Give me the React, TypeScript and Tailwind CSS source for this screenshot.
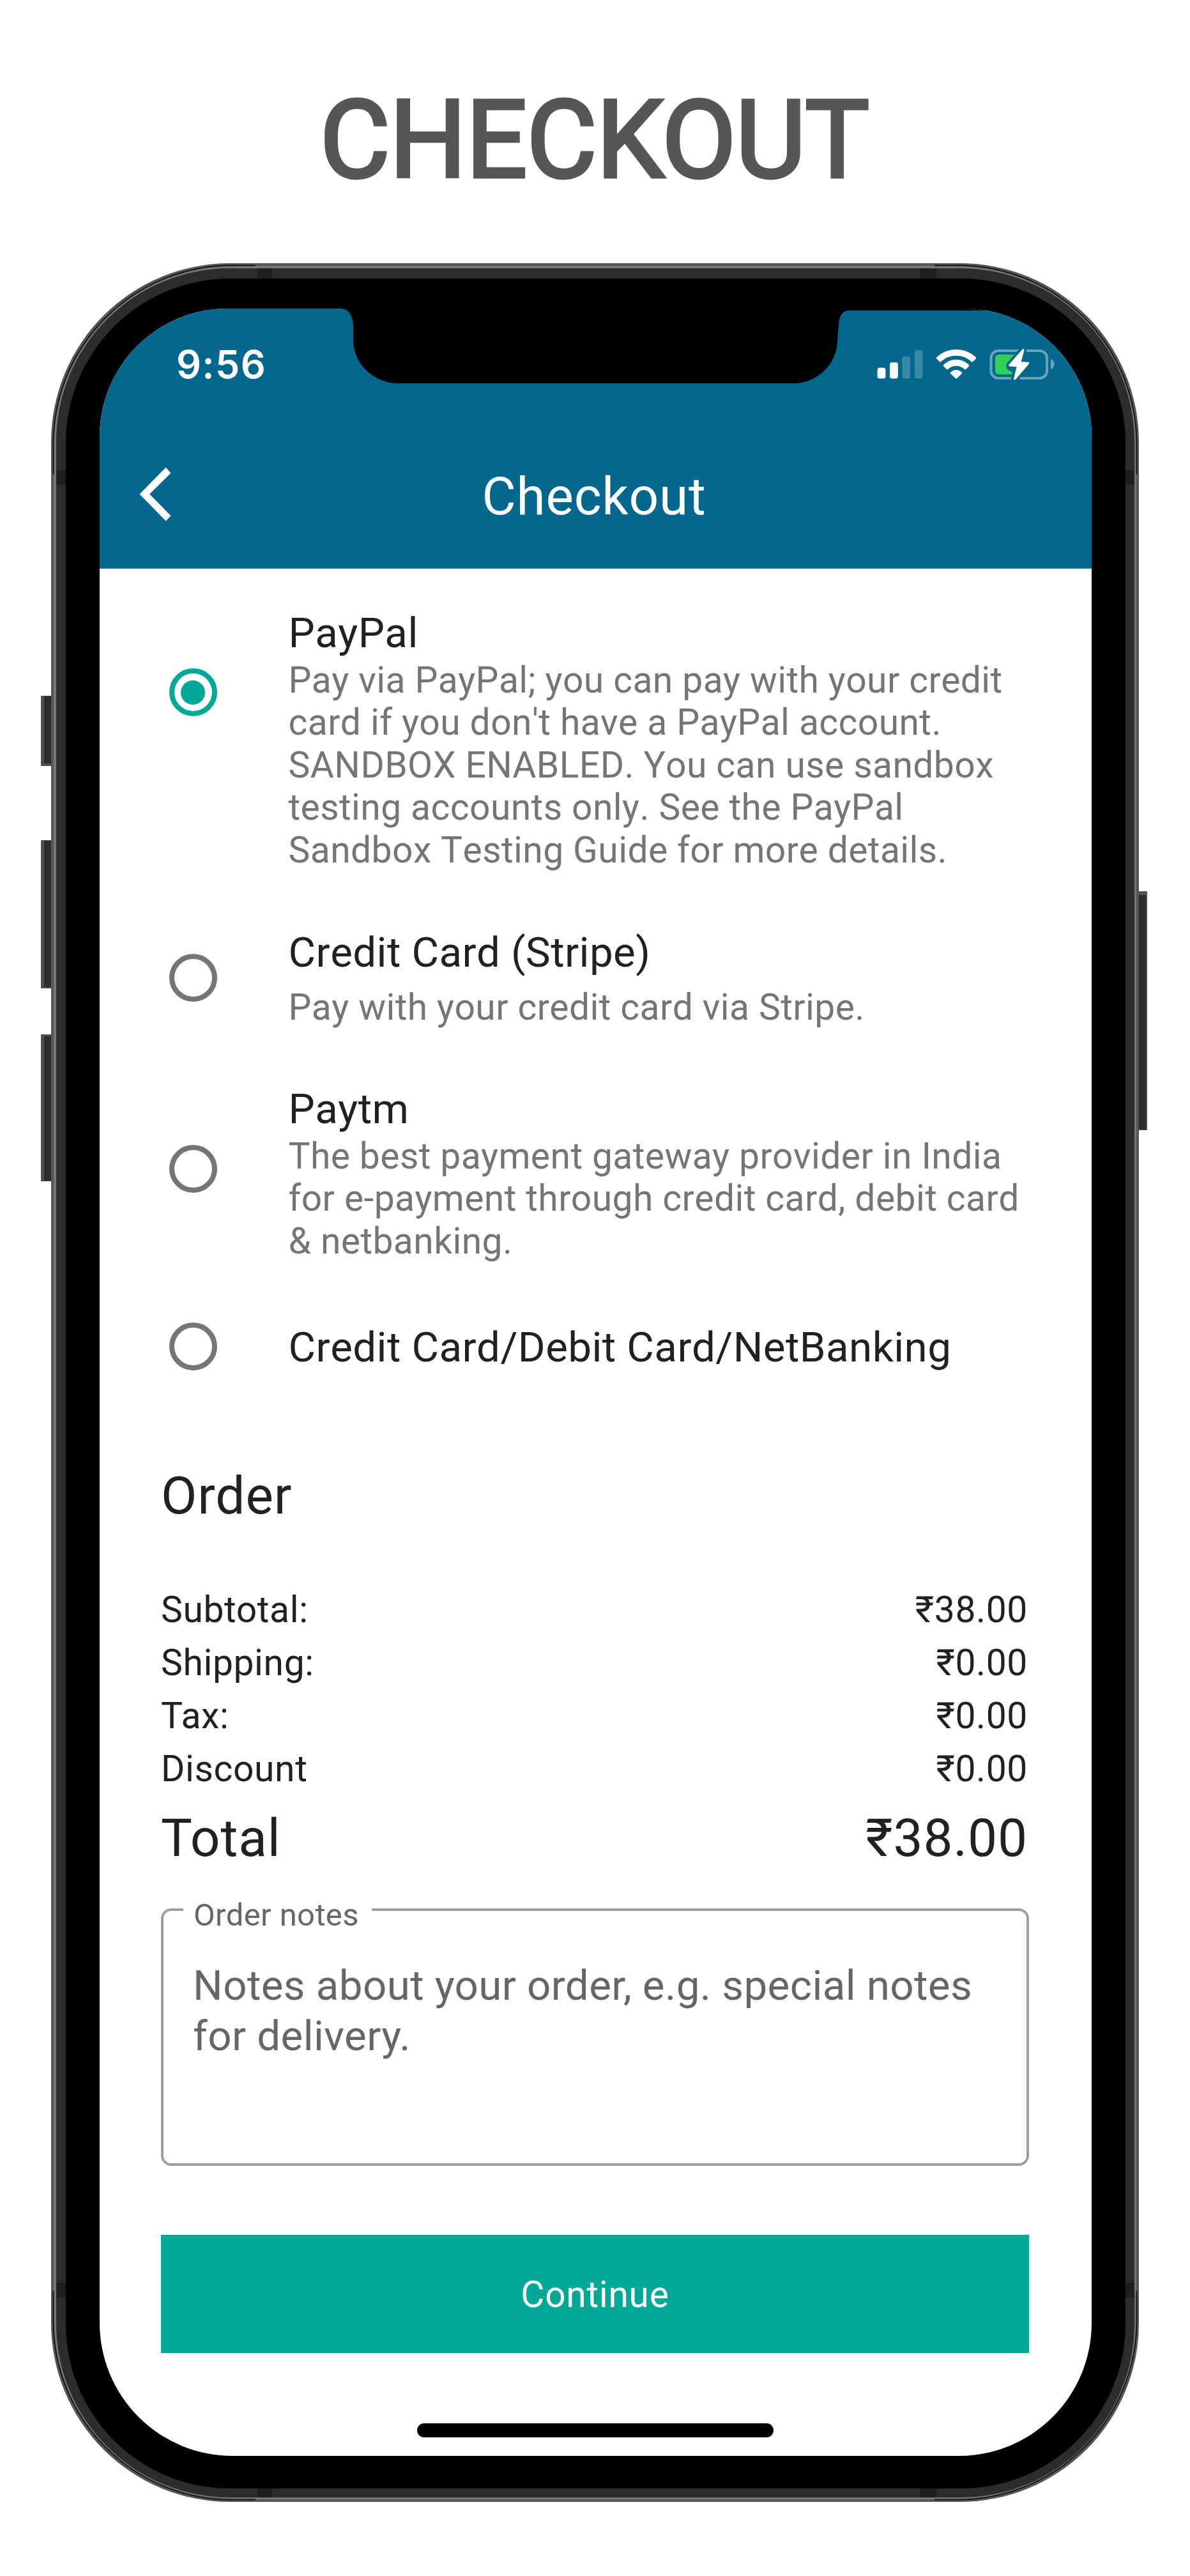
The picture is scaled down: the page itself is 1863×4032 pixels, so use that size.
import type { ReactNode } from 'react';

type Method = {
  name: string;
  lines?: string[];
  selected?: boolean;
  row: string;
  radio: string;
  gap?: string;
};

const methods: Method[] = [
  {
    name: 'PayPal',
    selected: true,
    row: 'h-[499.5px]',
    radio: 'pt-[94px]',
    gap: 'gap-[1.5px]',
    lines: [
      'Pay via PayPal; you can pay with your credit',
      "card if you don't have a PayPal account.",
      'SANDBOX ENABLED. You can use sandbox',
      'testing accounts only. See the PayPal',
      'Sandbox Testing Guide for more details.',
    ],
  },
  {
    name: 'Credit Card (Stripe)',
    row: 'h-[245.5px]',
    radio: 'pt-[41px]',
    gap: 'gap-[14px]',
    lines: ['Pay with your credit card via Stripe.'],
  },
  {
    name: 'Paytm',
    row: 'h-[373px]',
    radio: 'pt-[94.5px]',
    gap: 'gap-[1.5px]',
    lines: [
      'The best payment gateway provider in India',
      'for e-payment through credit card, debit card',
      '& netbanking.',
    ],
  },
  { name: 'Credit Card/Debit Card/NetBanking', row: 'h-[78px]', radio: 'pt-0' },
];

const totals = [
  ['Subtotal:', '₹38.00'],
  ['Shipping:', '₹0.00'],
  ['Tax:', '₹0.00'],
  ['Discount', '₹0.00'],
];

function Radio({ selected }: { selected?: boolean }) {
  return (
    <div
      className={`flex size-[75px] shrink-0 items-center justify-center rounded-full border-8 ${
        selected ? 'border-[#00a995]' : 'border-[#757575]'
      }`}
    >
      {selected && <div className="size-[38px] rounded-full bg-[#00a995]" />}
    </div>
  );
}

function StatusIcons() {
  return (
    <svg width="278" height="50" viewBox="1373 545 278 50" fill="#fff">
      <rect x="1373.6" y="575.6" width="12.8" height="17" rx="3.5" />
      <rect x="1393" y="567.3" width="12.8" height="25.3" rx="3.5" />
      <rect x="1412.5" y="557.7" width="12.4" height="34.9" rx="3.5" fillOpacity=".22" />
      <rect x="1432" y="548" width="12.4" height="44.6" rx="3.5" fillOpacity=".22" />
      <path d="M1466.3 559.2 Q1465.2 560.4 1466.3 561.6 L1471 566.1 Q1472.2 567 1473.4 566 C1486 553.7 1508 553.7 1520.6 566 Q1521.8 567 1523 566.1 L1527.7 561.6 Q1528.8 560.4 1527.7 559.2 C1511 542.8 1483 542.8 1466.3 559.2Z" />
      <path d="M1477.2 571.1 Q1476.2 572.3 1477.3 573.4 L1482 577.9 Q1483.2 578.7 1484.4 577.8 C1491.5 571.2 1502.5 571.2 1509.6 577.8 Q1510.8 578.7 1512 577.9 L1516.7 573.4 Q1517.8 572.3 1516.8 571.1 C1505.5 560 1488.5 560 1477.2 571.1Z" />
      <path d="M1488.2 582.8 Q1487.2 584 1488.3 585.1 L1495.8 592.1 Q1497 593.2 1498.2 592.1 L1505.7 585.1 Q1506.8 584 1505.8 582.8 C1501 577.6 1493 577.6 1488.2 582.8Z" />
      <rect x="1551.5" y="548.9" width="87.6" height="43" rx="11.5" fill="none" stroke="#fff" strokeOpacity=".4" strokeWidth="4" />
      <path d="M1645 561.7 C1652.5 564.5 1652.5 575.5 1645 578.5Z" fillOpacity=".4" />
      <path d="M1564 555 H1590 L1576 571 V577 L1590 586 H1564 Q1558 586 1558 580 V561 Q1558 555 1564 555Z" fill="#30d158" />
      <path
        d="M1600.4 547 L1579.5 570.8 Q1578.2 573.3 1581.2 573.6 L1591.6 574.2 L1587 592.6 Q1587.1 596 1590.2 593.8 L1611 569.6 Q1612.3 567.2 1609.2 566.8 L1598.7 566.2 L1603.5 548 Q1603.3 544.8 1600.4 547Z"
        stroke="#03678e"
        strokeWidth="8"
        paintOrder="stroke"
      />
    </svg>
  );
}

function Notch() {
  return (
    <svg className="absolute top-0 left-0" width="1553" height="118" viewBox="0 0 1553 118" fill="#000">
      <path d="M378 0 Q395 1 397 26 L397 51 C398 87 429 117 468 117 H1086 C1124 117 1155 86 1155 50 L1157 24 Q1159 3 1173 3 H1553 V0Z" />
    </svg>
  );
}

/* Hardware keys that stick out behind the phone's edge. */
function SideKeys() {
  return (
    <svg className="absolute inset-0 overflow-visible" width="1703" height="3504" viewBox="0 0 1703 3504">
      <g fill="#505050">
        <rect x="-16" y="677" width="20" height="110" />
        <rect x="-16" y="903" width="20" height="232" />
        <rect x="-16" y="1207" width="20" height="230" />
        <rect x="1699" y="983" width="17" height="374" />
      </g>
      <g fill="#2c2c2c">
        <rect x="-11" y="678" width="15" height="105" />
        <rect x="-11" y="904" width="15" height="229" />
        <rect x="-11" y="1210" width="15" height="226" />
        <rect x="1699" y="989" width="15" height="367" />
      </g>
    </svg>
  );
}

/* Antenna bands and the dark seam that follows each corner of the metal rim. */
function RimDetails() {
  return (
    <svg className="absolute inset-0" width="1703" height="3504" viewBox="0 0 1703 3504">
      <g fill="none" stroke="#161616" strokeWidth="2">
        <path d="M3.5 330 V283 A279.5 279.5 0 0 1 283 3.5 H320" />
        <path d="M1383 3.5 H1420 A279.5 279.5 0 0 1 1699.5 283 V330" />
        <path d="M3.5 3174 V3221 A279.5 279.5 0 0 0 283 3500.5 H320" />
        <path d="M1383 3500.5 H1420 A279.5 279.5 0 0 0 1699.5 3221 V3174" />
      </g>
      <g fill="#1e1e1e">
        <rect x="323" y="8" width="23" height="16" />
        <rect x="1360" y="8" width="26" height="16" />
        <rect x="323" y="3483" width="23" height="14" />
        <rect x="1360" y="3483" width="26" height="14" />
        <rect x="8" y="324" width="15" height="22" />
        <rect x="1682" y="324" width="14" height="22" />
        <rect x="8" y="3161" width="15" height="23" />
        <rect x="1682" y="3161" width="14" height="23" />
      </g>
    </svg>
  );
}

function Phone({ children }: { children: ReactNode }) {
  return (
    <div className="relative ml-20 h-[3504px] w-[1703px]">
      <SideKeys />
      <div className="relative h-full rounded-[280px] bg-[#555555] p-1">
        <div className="h-full rounded-[276px] bg-[#757575] pt-1 pr-[3px] pb-[3px] pl-1">
          <div className="h-full rounded-[272px] bg-[#2c2c2c] pt-4 pr-3.5 pb-3.5 pl-[15px]">
            <div className="h-full rounded-[257px] bg-black pt-[47px] pr-[53px] pb-[51px] pl-[53px]">
              <div className="relative flex h-full flex-col overflow-hidden rounded-t-[200px] rounded-b-[208px] bg-white">
                {children}
              </div>
            </div>
          </div>
        </div>
        <RimDetails />
      </div>
    </div>
  );
}

export default function App() {
  return (
    <div className="flex h-[4032px] w-[1863px] flex-col overflow-hidden bg-white font-['Roboto',sans-serif] text-[#212121]">
      <h1 className="h-[412px] pt-[118.5px] pr-0.5 text-center text-[169px] leading-[200px] tracking-[-0.9px] text-[#565656] [-webkit-text-stroke:4.8px_#565656]">
        CHECKOUT
      </h1>

      <Phone>
        <header className="flex h-[407px] shrink-0 flex-col bg-[#03678e] text-white">
          <div className="flex h-[124px] items-end justify-between pr-[58px] pl-[120px]">
            <span className="font-['Inter',sans-serif] text-[61px] leading-[74px] font-semibold tracking-[1.3px]">9:56</span>
            <div className="pb-3">
              <StatusIcons />
            </div>
          </div>
          <div className="grid flex-1 grid-cols-[200px_1fr_205px] items-center pt-[122px] pb-[65px]">
            <svg className="ml-[62px]" width="50" height="92" viewBox="218 731 50 92" fill="#fff">
              <path d="M259.7 731.6 L267.4 740.4 L234.2 773.4 L267.4 807.2 L259.7 815.6 L218.6 773.4Z" />
            </svg>
            <h2 className="text-center text-[82px] leading-[96px] tracking-[0.7px]">Checkout</h2>
          </div>
        </header>
        <Notch />

        <main className="flex w-[1455px] flex-1 flex-col pt-[62px] pl-24">
          <div className="flex flex-col [font-kerning:none]">
            {methods.map((m) => (
              <div key={m.name} className={`flex items-start gap-28 pl-[12.5px] ${m.row}`}>
                <div className={m.radio}>
                  <Radio selected={m.selected} />
                </div>
                <div className={`flex flex-col whitespace-nowrap ${m.gap ?? ''}`}>
                  <div className="text-[65.5px] leading-[78px] tracking-[0.4px]">{m.name}</div>
                  {m.lines && (
                    <div className="text-[57px] leading-[66.5px] tracking-[0.4px] text-[#757575]">
                      {m.lines.map((l) => (
                        <div key={l}>{l}</div>
                      ))}
                    </div>
                  )}
                </div>
              </div>
            ))}
          </div>

          <section className="flex flex-col pt-[145px] pr-0.5">
            <h3 className="pb-[89px] text-[82px] leading-[96px] tracking-[0.9px]">Order</h3>
            {totals.map(([k, v]) => (
              <div key={k} className="flex justify-between text-[57px] leading-[83px] tracking-[0.6px]">
                <span>{k}</span>
                <span>{v}</span>
              </div>
            ))}
            <div className="flex justify-between pt-[19px] text-[82px] leading-[96px] tracking-[0.9px]">
              <span>Total</span>
              <span>₹38.00</span>
            </div>
          </section>

          <div className="relative mt-[62px] h-[403px] rounded-2xl border-4 border-[#9e9e9e] pt-[77px] pl-[46px] text-[65.5px] leading-[79px] tracking-[0.4px] text-[#666666]">
            <span className="absolute -top-[23px] left-[31px] w-[295px] bg-white pl-4 text-[49px] leading-[60px] tracking-[0.4px]">
              Order notes
            </span>
            <div className="whitespace-nowrap">Notes about your order, e.g. special notes</div>
            <div>for delivery.</div>
          </div>

          <button className="mt-[107.5px] flex h-[185.5px] items-center justify-center bg-[#00a995] pt-1 text-[57px] leading-[66px] tracking-[0.7px] text-white">
            Continue
          </button>
          <div className="mt-[110px] h-[22px] w-[558px] self-center rounded-full bg-black" />
        </main>
      </Phone>
    </div>
  );
}
